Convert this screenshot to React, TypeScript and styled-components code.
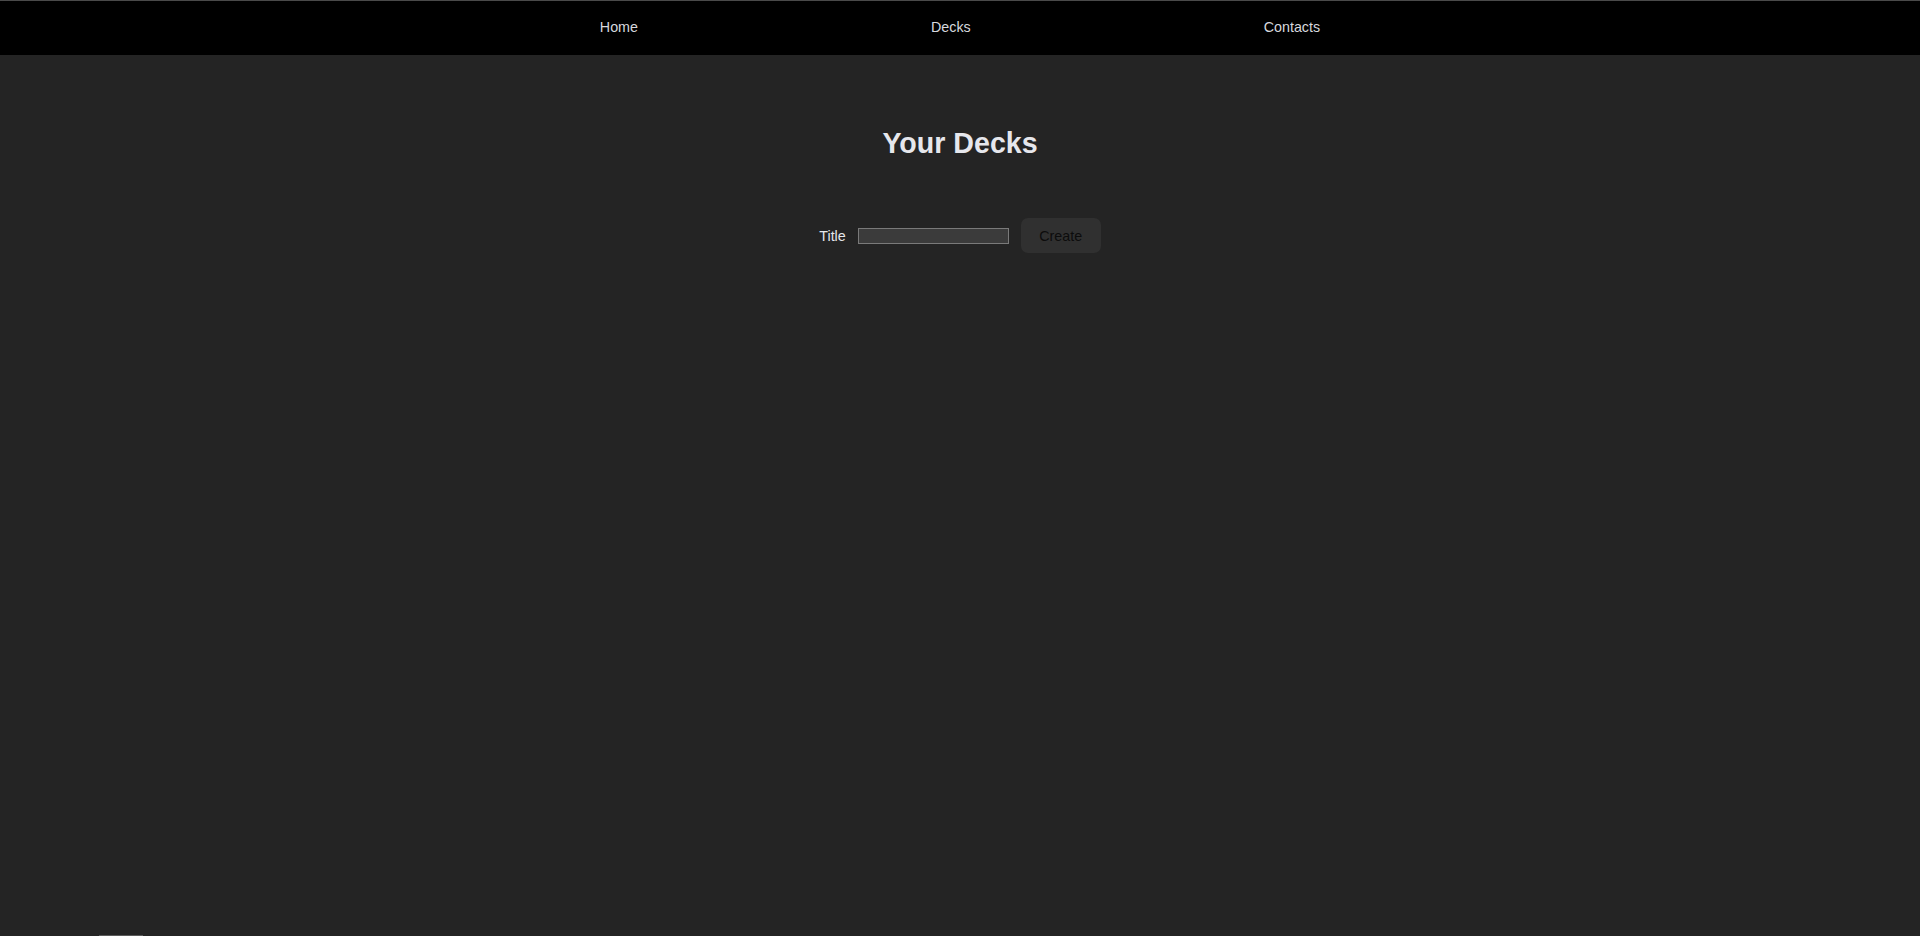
import React from "react";
import styled, { createGlobalStyle } from "styled-components";

const Global = createGlobalStyle`
  html, body { margin: 0; padding: 0; background: #242424; }
  body {
    font-family: "Liberation Sans", Arial, sans-serif;
    color: rgba(255, 255, 255, 0.87);
    overflow: hidden;
  }
`;

const Page = styled.div`
  display: flex;
  flex-direction: column;
  min-height: 935px;
`;

const NavBar = styled.nav`
  height: 55px;
  background: #000;
  border-top: 1px solid #4a4a4a;
  display: flex;
  align-items: center;
  justify-content: center;
  padding-bottom: 2px;
  box-sizing: border-box;
`;

const NavList = styled.ul`
  list-style: none;
  margin: 0;
  padding: 0;
  display: flex;
  gap: 293px;
`;

const NavLink = styled.a`
  color: #d6d8de;
  font-size: 14.3px;
  text-decoration: none;
  cursor: pointer;
`;

const Main = styled.main`
  flex: 1;
  display: flex;
  flex-direction: column;
  align-items: center;
  padding-top: 72px;
`;

const Heading = styled.h1`
  margin: 0;
  font-size: 28.6px;
  font-weight: 700;
  color: #e6e7ec;
`;

const Form = styled.form`
  display: flex;
  align-items: center;
  margin-top: 58px;
`;

const Label = styled.label`
  font-size: 14.3px;
  color: #e6e7ec;
  margin-right: 12px;
`;

const Input = styled.input`
  width: 151px;
  height: 16px;
  box-sizing: border-box;
  background: #3b3b3b;
  border: 1px solid #7a7a7a;
  padding: 0 2px;
  color: #fff;
  outline: none;
  margin-right: 12px;
`;

const Button = styled.button`
  width: 80px;
  height: 35px;
  border: none;
  border-radius: 7px;
  background: #303030;
  color: #0c0c0c;
  font-family: "Liberation Sans", Arial, sans-serif;
  font-size: 14.3px;
  cursor: pointer;
`;

const Peek = styled.div`
  height: 1px;
  width: 44px;
  margin-left: 99px;
  background: #5a5a5a;
`;

export default function App() {
  return (
    <>
      <Global />
      <Page>
        <NavBar>
          <NavList>
            <li><NavLink>Home</NavLink></li>
            <li><NavLink>Decks</NavLink></li>
            <li><NavLink>Contacts</NavLink></li>
          </NavList>
        </NavBar>
        <Main>
          <Heading>Your Decks</Heading>
          <Form onSubmit={(e) => e.preventDefault()}>
            <Label htmlFor="title">Title</Label>
            <Input id="title" type="text" />
            <Button type="submit">Create</Button>
          </Form>
        </Main>
      </Page>
      <Peek />
    </>
  );
}
